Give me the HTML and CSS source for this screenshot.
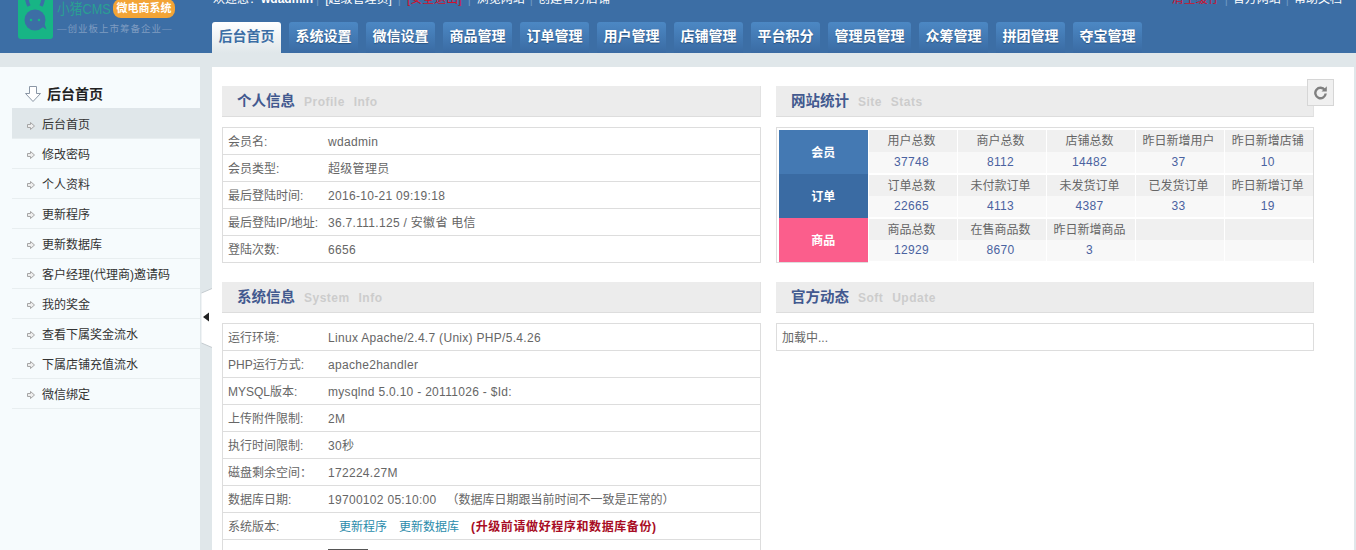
FILE: index.html
```html
<!DOCTYPE html>
<html lang="zh">
<head>
<meta charset="utf-8">
<title>后台首页</title>
<link rel="stylesheet" href="styles.css">
</head>
<body>
<div class="page">
  <header class="header">
    <div class="logo">
      <svg class="logo-icon" width="35" height="51" viewBox="0 0 35 51">
        <rect x="0" y="2" width="35" height="49" rx="3" fill="#17b585"/>
        <path d="M8 2c0 7 1 12 3 16M26 2c0 7-1 12-3 16" fill="none" stroke="#3c6ea5" stroke-width="3.500"/>
        <circle cx="17" cy="32" r="10.500" fill="#3c6ea5"/>
        <path d="M23 38l5.500 3.500-2.500-7z" fill="#3c6ea5"/>
        <circle cx="13" cy="32" r="1.300" fill="#17b585"/><circle cx="21" cy="32" r="1.300" fill="#17b585"/>
      </svg>
      <div class="logo-text">
        <div class="logo-line">
          <span class="logo-name">小猪CMS</span>
          <span class="logo-pill">微电商系统</span>
        </div>
        <div class="logo-sub">—创业板上市筹备企业—</div>
      </div>
    </div>
    <div class="head-main">
      <div class="topbar">
        <div class="top-left">
          <span class="t-item">欢迎您！<b>wdadmin</b></span><span class="t-sep t-sep-first">|</span><span class="t-item">[超级管理员]</span><span class="t-sep">|</span><span class="t-item t-red">[安全退出]</span><span class="t-sep">|</span><span class="t-item">浏览网站</span><span class="t-sep t-sep-tight">|</span><span class="t-item">创建官方店铺</span>
        </div>
        <div class="top-right">
          <span class="t-item t-red">清空缓存</span><span class="t-sep t-sep-tight">|</span><span class="t-item">官方网站</span><span class="t-sep t-sep-tight">|</span><span class="t-item">帮助文档</span>
        </div>
      </div>
      <nav class="tabs">
        <a class="tab tab-on">后台首页</a>
        <a class="tab">系统设置</a>
        <a class="tab">微信设置</a>
        <a class="tab">商品管理</a>
        <a class="tab">订单管理</a>
        <a class="tab">用户管理</a>
        <a class="tab">店铺管理</a>
        <a class="tab">平台积分</a>
        <a class="tab">管理员管理</a>
        <a class="tab">众筹管理</a>
        <a class="tab">拼团管理</a>
        <a class="tab">夺宝管理</a>
      </nav>
    </div>
  </header>

  <div class="body-wrap">
    <aside class="side">
      <h2 class="side-title">
        <svg width="18" height="18" viewBox="0 0 18 18"><path d="M5.500 1.500h7v7h4L9 16.500 1.500 8.500h4z" fill="#fff" stroke="#8b97a6"/></svg>
        后台首页
      </h2>
      <ul class="menu">
        <li class="menu-item menu-on"><svg class="arr" width="8" height="8" viewBox="0 0 8 8"><path d="M.5 2.500h3V.5L7.500 4 3.500 7.500v-2h-3z" fill="#eee" stroke="#a5a5a5"/></svg>后台首页</li>
        <li class="menu-item"><svg class="arr" width="8" height="8" viewBox="0 0 8 8"><path d="M.5 2.500h3V.5L7.500 4 3.500 7.500v-2h-3z" fill="#eee" stroke="#a5a5a5"/></svg>修改密码</li>
        <li class="menu-item"><svg class="arr" width="8" height="8" viewBox="0 0 8 8"><path d="M.5 2.500h3V.5L7.500 4 3.500 7.500v-2h-3z" fill="#eee" stroke="#a5a5a5"/></svg>个人资料</li>
        <li class="menu-item"><svg class="arr" width="8" height="8" viewBox="0 0 8 8"><path d="M.5 2.500h3V.5L7.500 4 3.500 7.500v-2h-3z" fill="#eee" stroke="#a5a5a5"/></svg>更新程序</li>
        <li class="menu-item"><svg class="arr" width="8" height="8" viewBox="0 0 8 8"><path d="M.5 2.500h3V.5L7.500 4 3.500 7.500v-2h-3z" fill="#eee" stroke="#a5a5a5"/></svg>更新数据库</li>
        <li class="menu-item"><svg class="arr" width="8" height="8" viewBox="0 0 8 8"><path d="M.5 2.500h3V.5L7.500 4 3.500 7.500v-2h-3z" fill="#eee" stroke="#a5a5a5"/></svg>客户经理(代理商)邀请码</li>
        <li class="menu-item"><svg class="arr" width="8" height="8" viewBox="0 0 8 8"><path d="M.5 2.500h3V.5L7.500 4 3.500 7.500v-2h-3z" fill="#eee" stroke="#a5a5a5"/></svg>我的奖金</li>
        <li class="menu-item"><svg class="arr" width="8" height="8" viewBox="0 0 8 8"><path d="M.5 2.500h3V.5L7.500 4 3.500 7.500v-2h-3z" fill="#eee" stroke="#a5a5a5"/></svg>查看下属奖金流水</li>
        <li class="menu-item"><svg class="arr" width="8" height="8" viewBox="0 0 8 8"><path d="M.5 2.500h3V.5L7.500 4 3.500 7.500v-2h-3z" fill="#eee" stroke="#a5a5a5"/></svg>下属店铺充值流水</li>
        <li class="menu-item"><svg class="arr" width="8" height="8" viewBox="0 0 8 8"><path d="M.5 2.500h3V.5L7.500 4 3.500 7.500v-2h-3z" fill="#eee" stroke="#a5a5a5"/></svg>微信绑定</li>
      </ul>
    </aside>

    <svg class="collapse" width="12" height="60" viewBox="0 0 12 60">
      <path d="M12 .5L1.500 5v50L12 59.500z" fill="#fff"/>
      <path d="M12 .5L1.500 5M1.500 55L12 59.500" fill="none" stroke="#c4cbcf"/>
      <path d="M3 29l6-4.500v9z" fill="#222"/>
    </svg>

    <main class="main">
      <button class="refresh" type="button" aria-label="刷新">
        <svg width="15" height="15" viewBox="0 0 15 15"><path d="M11.800 5A5.200 5.200 0 1 0 12.700 8.500" fill="none" stroke="#808080" stroke-width="2.400"/><path d="M13.800 1.200v5.300H8.500z" fill="#808080"/></svg>
      </button>
      <div class="col">
        <section class="sec">
          <h3 class="sec-head">个人信息<span class="sec-en">Profile Info</span></h3>
          <div class="info">
            <div class="row"><span class="lab">会员名:</span><span class="val">wdadmin</span></div>
            <div class="row"><span class="lab">会员类型:</span><span class="val">超级管理员</span></div>
            <div class="row"><span class="lab">最后登陆时间:</span><span class="val">2016-10-21 09:19:18</span></div>
            <div class="row"><span class="lab">最后登陆IP/地址:</span><span class="val">36.7.111.125 / 安徽省 电信</span></div>
            <div class="row"><span class="lab">登陆次数:</span><span class="val">6656</span></div>
          </div>
        </section>
        <section class="sec">
          <h3 class="sec-head">系统信息<span class="sec-en">System Info</span></h3>
          <div class="info">
            <div class="row"><span class="lab">运行环境:</span><span class="val">Linux Apache/2.4.7 (Unix) PHP/5.4.26</span></div>
            <div class="row"><span class="lab">PHP运行方式:</span><span class="val">apache2handler</span></div>
            <div class="row"><span class="lab">MYSQL版本:</span><span class="val">mysqlnd 5.0.10 - 20111026 - $Id:</span></div>
            <div class="row"><span class="lab">上传附件限制:</span><span class="val">2M</span></div>
            <div class="row"><span class="lab">执行时间限制:</span><span class="val">30秒</span></div>
            <div class="row"><span class="lab">磁盘剩余空间：</span><span class="val">172224.27M</span></div>
            <div class="row"><span class="lab">数据库日期:</span><span class="val">19700102 05:10:00<span class="note">（数据库日期跟当前时间不一致是正常的）</span></span></div>
            <div class="row"><span class="lab">系统版本:</span><span class="ver"><a class="lnk">更新程序</a><a class="lnk">更新数据库</a><b class="warn">(升级前请做好程序和数据库备份)</b></span></div>
            <div class="row"><span class="lab"></span><span class="btn-top"></span></div>
          </div>
        </section>
      </div>
      <div class="col">
        <section class="sec">
          <h3 class="sec-head">网站统计<span class="sec-en">Site Stats</span></h3>
          <div class="stats">
            <table class="st">
              <tbody>
                <tr class="st-l"><th class="cat cat-a" rowspan="2">会员</th><td>用户总数</td><td>商户总数</td><td>店铺总数</td><td>昨日新增用户</td><td>昨日新增店铺</td></tr>
                <tr class="st-v"><td>37748</td><td>8112</td><td>14482</td><td>37</td><td>10</td></tr>
                <tr class="st-l"><th class="cat cat-b" rowspan="2">订单</th><td>订单总数</td><td>未付款订单</td><td>未发货订单</td><td>已发货订单</td><td>昨日新增订单</td></tr>
                <tr class="st-v"><td>22665</td><td>4113</td><td>4387</td><td>33</td><td>19</td></tr>
                <tr class="st-l"><th class="cat cat-c" rowspan="2">商品</th><td>商品总数</td><td>在售商品数</td><td>昨日新增商品</td><td></td><td></td></tr>
                <tr class="st-v"><td>12929</td><td>8670</td><td>3</td><td></td><td></td></tr>
              </tbody>
            </table>
          </div>
        </section>
        <section class="sec">
          <h3 class="sec-head">官方动态<span class="sec-en">Soft Update</span></h3>
          <div class="loading">加载中...</div>
        </section>
      </div>
    </main>
  </div>
</div>
</body>
</html>
```
FILE: styles.css
```css
* { box-sizing: border-box; }
html, body { margin: 0; padding: 0; height: 550px; overflow: hidden; }
body {
  background: #e0e7ea;
  font: 12px/1.2 "Liberation Sans", "Noto Sans CJK SC", sans-serif;
  color: #666;
}
.page { margin-top: -12px; }

/* header */
.header { display: flex; height: 65px; background: #3c6ea5; }
.logo { width: 212px; flex: none; display: flex; padding-left: 18px; }
.logo-icon { flex: none; }
.logo-text { margin-left: 4px; }
.logo-line { display: flex; align-items: center; height: 32px; padding-top: 9px; }
.logo-name {
  display: block; color: #2a9f93; font-size: 15px; width: 56px; white-space: nowrap;
  transform: scaleX(.85); transform-origin: left center;
}
.logo-pill {
  background: #f3a436; color: #fff; font-size: 11px; font-weight: bold;
  border-radius: 8px; width: 62px; height: 19px; line-height: 19px; text-align: center; white-space: nowrap;
}
.logo-sub { color: #7f9cc1; font-size: 9.5px; letter-spacing: 1px; margin-top: 3px; white-space: nowrap; }

.head-main { flex: 1; display: flex; flex-direction: column; }
.topbar {
  display: flex; justify-content: space-between; height: 34px;
  padding: 4px 14px 0 1px; color: #fff; white-space: nowrap;
}
.t-item { display: inline-block; }
.t-item b { font-weight: bold; }
.t-sep { margin: 0 6px; color: #6f97c2; }
.t-sep-first { margin: 0 6px 0 3px; }
.t-sep-tight { margin: 0 5px; }
.t-red { color: #d0112b; }
.tabs { display: flex; gap: 8px; height: 31px; }
.tab {
  display: block; height: 31px; padding: 0 6px; line-height: 28px;
  font-size: 14px; font-weight: bold; color: #fff; white-space: nowrap;
  border-radius: 3px 3px 0 0; text-shadow: 0 1px 1px #2c5480;
  background: linear-gradient(#4c88c4, #3a6ba3);
  width: 69px; text-align: center;
}
.tab:nth-child(9) { width: 83px; }
.tab-on { background: linear-gradient(#fff, #e0e7ea); color: #3c6ea5; text-shadow: none; }

/* layout */
.body-wrap { position: relative; display: flex; margin-top: 14px; height: 600px; }
.side { width: 200px; flex: none; background: #f6fbfd; padding-left: 12px; margin-right: 12px; }
.side-title {
  margin: 0; height: 43px; padding: 18px 0 0 12px; display: flex; align-items: flex-start; gap: 5px;
  font-size: 14px; line-height: 18px; font-weight: bold; color: #222; border-bottom: 2px solid #dfe6ea;
}
.menu { list-style: none; margin: 0; padding: 0; }
.menu-item {
  height: 30px; padding-top: 3px; display: flex; align-items: center; color: #333;
  border-bottom: 1px solid #e8eef0; padding-left: 15px; white-space: nowrap;
}
.menu-item:first-child { height: 29px; }
.menu-on { background: #e0e7ea; }
.arr { margin-right: 7px; flex: none; }

.collapse { position: absolute; left: 200px; top: 221px; }

.main {
  position: relative; width: 1142px; flex: none; background: #fff; padding: 19px 0 0 10px;
  display: grid; grid-template-columns: 539px 538px; column-gap: 15px; align-items: start;
}
.refresh {
  position: absolute; left: 1095px; top: 12px; width: 27px; height: 27px; padding: 0;
  background: #f0f0f0; border: 1px solid #d6d6d6; display: flex; align-items: center; justify-content: center;
}
.sec { margin-bottom: 19px; }
.sec-head {
  margin: 0; height: 31px; background: #ececec; border-bottom: 1px solid #ddd; border-right: 1px solid #e2e2e2;
  padding-left: 15px; font-size: 14.5px; line-height: 31px; font-weight: bold; color: #42598f; white-space: nowrap;
}
.sec-en { color: #ccc; margin-left: 9px; font-size: 12px; letter-spacing: .5px; word-spacing: 5px; }
.info { margin-top: 10px; border: 1px solid #ddd; }
.row {
  display: flex; height: 27px; line-height: 28px; padding-left: 5px; border-bottom: 1px solid #ddd; white-space: nowrap;
}
.row:last-child { border-bottom: 0; height: 26px; }
.lab { width: 100px; flex: none; }
.val { letter-spacing: .3px; }
.note { letter-spacing: 0; margin-left: 10px; }
.ver { padding-left: 11px; }
.lnk { color: #2b8cab; margin-right: 12px; }
.warn { color: #a80c24; letter-spacing: .6px; }
.btn-top { display: block; width: 40px; height: 12px; margin-top: 9px; border-top: 2px solid #555; }

.stats { margin-top: 10px; border: 1px solid #ddd; padding: 2px 0 0 2px; height: 136px; }
.st { border-collapse: collapse; table-layout: fixed; width: 534px; }
.st td, .st th { padding: 0; text-align: center; border: 0; overflow: hidden; white-space: nowrap; }
.st td { padding: 1px 2px 0 0; }
.st th { width: 89px; color: #fff; font-size: 12px; font-weight: bold; padding-top: 2px; }
.st-l td { height: 22px; background: #f0f0f0; border-left: 1px solid #fff; }
.st-v td { height: 22px; padding-top: 0; background: #f8f8f8; border-left: 1px solid #fff; border-bottom: 2px solid #fff; color: #4a62a0; letter-spacing: .3px; }
.cat-a { background: #4479b3; }
.cat-b { background: #3a6ba3; }
.cat-c { background: #fb5e8c; }
.loading { margin-top: 10px; height: 28px; line-height: 28px; border: 1px solid #ddd; padding-left: 5px; }
```
